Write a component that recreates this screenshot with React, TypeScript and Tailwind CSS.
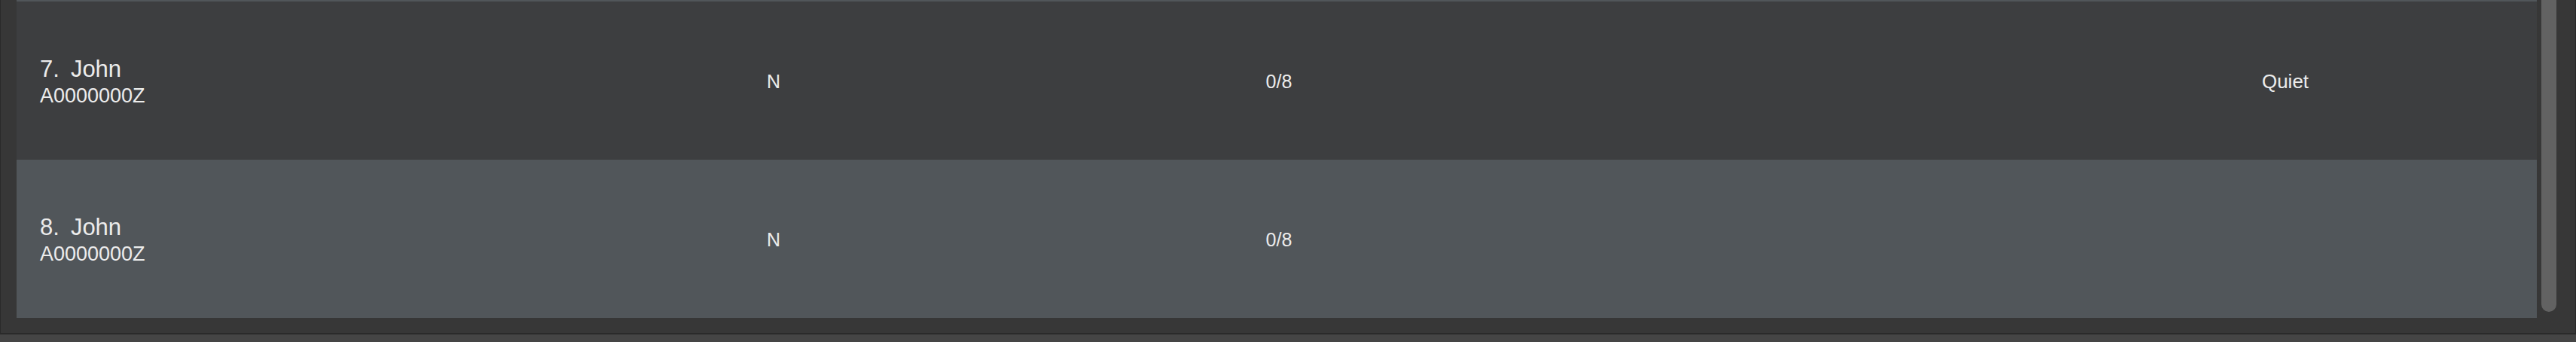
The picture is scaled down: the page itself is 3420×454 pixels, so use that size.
import React from 'react';

interface Person {
  index: number;
  name: string;
  matric: string;
  flag: string;
  progress: string;
  status: string;
}

const people: Person[] = [
  { index: 7, name: 'John', matric: 'A0000000Z', flag: 'N', progress: '0/8', status: 'Quiet' },
  { index: 8, name: 'John', matric: 'A0000000Z', flag: 'N', progress: '0/8', status: '' },
];

const PersonRow: React.FC<{ person: Person }> = ({ person }) => {
  const odd = person.index % 2 === 1;
  return (
    <div
      className={`h-[210px] grid grid-cols-[760px_490px_852px_576px_668px] items-center text-[#ececec] ${
        odd ? 'bg-[#3d3e40]' : 'bg-[#51565a]'
      }`}
    >
      {/* name + matric */}
      <div className="pl-[31px] flex flex-col pt-[2px]">
        <div className="text-[31px] leading-[38px] flex">
          <span>{person.index}.</span>
          <span className="ml-[15px]">{person.name}</span>
        </div>
        <div className="text-[27px] leading-[33px]">{person.matric}</div>
      </div>
      <div className="text-center text-[25px] leading-[30px] pt-[2px]">{person.flag}</div>
      <div className="text-center text-[25px] leading-[30px] pt-[2px]">{person.progress}</div>
      <div />
      <div className="text-center text-[26px] leading-[30px] pt-[2px]">{person.status}</div>
    </div>
  );
};

export default function App() {
  return (
    <div
      className="w-[3420px] h-[454px] flex flex-col bg-[#373737] overflow-hidden"
      style={{ fontFamily: '"Liberation Sans", Arial, sans-serif' }}
    >
      <div className="h-[442px] flex border-l border-r border-[#2a2a2a]">
        {/* list, scrolled so only the tail of row 6 shows */}
        <div className="ml-[21px] w-[3346px] h-[422px] flex flex-col">
          <div className="h-[2px] bg-[#51565a]" />
          {people.map((p) => (
            <PersonRow key={p.index} person={p} />
          ))}
        </div>
        {/* scroll bar */}
        <div className="flex-1 pl-[6px]">
          <div className="w-[20px] h-[414px] bg-[#626262] rounded-b-[10px]" />
        </div>
      </div>
      <div className="h-[2px] bg-[#2a2a2a]" />
      <div className="flex-1 bg-[#454545]" />
    </div>
  );
}
